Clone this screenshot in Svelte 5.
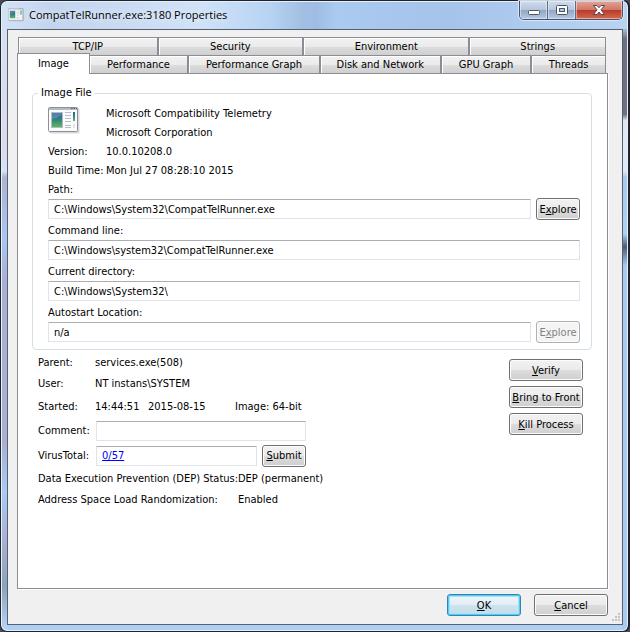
<script>
  const backTabs = [
    { name: "TCP/IP", size: 139 },
    { name: "Security", size: 145 },
    { name: "Environment", size: 166 },
    { name: "Strings", size: 136 },
  ];

  const frontTabs = [
    { name: "Image", size: 72 },
    { name: "Performance", size: 99 },
    { name: "Performance Graph", size: 132 },
    { name: "Disk and Network", size: 121 },
    { name: "GPU Graph", size: 90 },
    { name: "Threads", size: 74 },
  ];

  let active = $state("Image");
  let comment = $state("");

  let fields = $state([
    { id: "path", label: "Path:", value: "C:\\Windows\\System32\\CompatTelRunner.exe", explore: true },
    { id: "cmd", label: "Command line:", value: "C:\\Windows\\system32\\CompatTelRunner.exe" },
    { id: "cwd", label: "Current directory:", value: "C:\\Windows\\System32\\" },
    { id: "autostart", label: "Autostart Location:", value: "n/a", explore: true, disabled: true },
  ]);
</script>

{#snippet appIcon()}
  <svg class="app-icon" viewBox="0 0 32 27" aria-hidden="true">
    <rect x="1.5" y="1.5" width="30" height="25" rx="1" fill="#000" opacity=".15" />
    <rect x=".5" y=".5" width="29" height="24" rx="1" fill="#fafbfc" stroke="#8b9097" />
    <path d="M1 2h28" stroke="#b4bac2" stroke-width="2" />
    <path d="M23 1.5h1.500M25.500 1.500h1.500M28 1.500h1" stroke="#5a626b" />
    <rect x="3" y="5" width="12" height="16" fill="#b3bbc4" />
    <rect x="4" y="6" width="10" height="14" fill="url(#screen)" />
    <path d="M4 12q5-1 10-4v-2h-10z" fill="#fff" opacity=".18" />
    <path d="M17 5.500h6M17 8.500h6M17 11.500h6M17 14.500h6M17 18.500h6M17 20.500h6" stroke="#b9bcc0" />
    <rect x="25" y="5" width="2" height="9" fill="url(#screen)" />
    <rect x="25" y="17" width="2" height="4" fill="#e4e6e8" />
    <defs>
      <linearGradient id="screen" x1="0" y1="0" x2="0" y2="1">
        <stop offset="0" stop-color="#2c5f9e" />
        <stop offset=".5" stop-color="#34857f" />
        <stop offset="1" stop-color="#5cb85a" />
      </linearGradient>
    </defs>
  </svg>
{/snippet}

<div class="window">
  <header>
    <span class="small-icon">{@render appIcon()}</span>
    <h1>CompatTelRunner.exe:3180 Properties</h1>
    <div class="caption">
      <button aria-label="Minimize">
        <svg width="14" height="12" viewBox="0 0 14 12">
          <rect x="1.500" y="6.500" width="11" height="4" rx="1" fill="#fff" stroke="#4c5567" />
        </svg>
      </button>
      <button aria-label="Maximize">
        <svg width="14" height="12" viewBox="0 0 14 12">
          <rect x="1.500" y="1.500" width="11" height="9" rx="1" fill="#fff" stroke="#4c5567" />
          <rect x="4.500" y="4.500" width="5" height="3" fill="#b6c6dc" stroke="#4c5567" />
        </svg>
      </button>
      <button class="close" aria-label="Close">
        <svg width="14" height="12" viewBox="0 0 14 12">
          <path
            d="M1.500 1.500h3.500l2 2.200 2-2.200h3.500l-3.500 4.300 3.500 4.700h-3.500l-2-2.500-2 2.500h-3.500l3.500-4.700z"
            fill="#fff"
            stroke="#544650"
          />
        </svg>
      </button>
    </div>
  </header>

  <main>
    <div class="tabs" role="tablist">
      <div class="row back">
        {#each backTabs as tab}
          <button role="tab" aria-selected={active === tab.name} style="flex-grow: {tab.size}" onclick={() => (active = tab.name)}>
            {tab.name}
          </button>
        {/each}
      </div>
      <div class="row front">
        {#each frontTabs as tab}
          <button
            role="tab"
            class:active={active === tab.name}
            aria-selected={active === tab.name}
            style="flex-grow: {tab.size}"
            onclick={() => (active = tab.name)}
          >
            {tab.name}
          </button>
        {/each}
      </div>
    </div>

    <section class="panel" role="tabpanel">
      <fieldset>
        <legend>Image File</legend>
        <div class="about">
          <span class="big-icon">{@render appIcon()}</span>
          <span>Microsoft Compatibility Telemetry</span>
          <span>Microsoft Corporation</span>
          <span>Version:</span>
          <span>10.0.10208.0</span>
          <span>Build Time:</span>
          <span>Mon Jul 27 08:28:10 2015</span>
        </div>
        <div class="fields">
          {#each fields as field}
            <div class="field">
              <label for={field.id}>{field.label}</label>
              <div class="line">
                <input id={field.id} type="text" readonly value={field.value} />
                {#if field.explore}
                  <button class="btn" disabled={field.disabled}>E<u>x</u>plore</button>
                {/if}
              </div>
            </div>
          {/each}
        </div>
      </fieldset>

      <div class="details">
        <div class="info">
          <div class="item"><span>Parent:</span><span>services.exe(508)</span></div>
          <div class="item"><span>User:</span><span>NT instans\SYSTEM</span></div>
          <div class="item started">
            <span>Started:</span><span>14:44:51</span><span>2015-08-15</span><span>Image: 64-bit</span>
          </div>
          <div class="item entry">
            <label for="comment">Comment:</label>
            <input id="comment" type="text" bind:value={comment} />
          </div>
          <div class="item entry">
            <span>VirusTotal:</span>
            <div class="line">
              <div class="result"><a href="#virustotal">0/57</a></div>
              <button class="btn"><u>S</u>ubmit</button>
            </div>
          </div>
          <div class="item wide"><span>Data Execution Prevention (DEP) Status:</span><span>DEP (permanent)</span></div>
          <div class="item wide"><span>Address Space Load Randomization:</span><span>Enabled</span></div>
        </div>
        <div class="actions">
          <button class="btn"><u>V</u>erify</button>
          <button class="btn"><u>B</u>ring to Front</button>
          <button class="btn"><u>K</u>ill Process</button>
        </div>
      </div>
    </section>

    <footer>
      <button class="btn default"><u>O</u>K</button>
      <button class="btn"><u>C</u>ancel</button>
      <svg class="grip" width="9" height="9" viewBox="0 0 9 9" aria-hidden="true">
        <path d="M7 0h2v2h-2zM4 3h2v2h-2zM7 3h2v2h-2zM1 6h2v2h-2zM4 6h2v2h-2zM7 6h2v2h-2z" fill="#c4c4c4" />
      </svg>
    </footer>
  </main>
</div>

<style>
  :global(body) {
    margin: 0;
    background: #4a4a52;
  }

  .window,
  button,
  input {
    font-family: Tahoma, "DejaVu Sans Condensed", "DejaVu Sans", sans-serif;
    font-size: 11px;
    color: #000;
  }

  .window {
    box-sizing: border-box;
    display: flex;
    flex-direction: column;
    min-height: 100vh;
    padding: 0 5px 6px 6px;
    border: 1px solid #20222c;
    border-right-width: 2px;
    border-radius: 7px;
    box-shadow: inset 0 0 0 1px #e4f1fd;
    background:
      linear-gradient(90deg, #d3e3f6 0, #c3d4ee 50px, #c9dbf3 120px, #cfe2f8 200px, #b7d3f2 270px, #a3bfe2 300px, #9fbde3 315px, #abcaf0 335px, #a6c3ea 450px, #b9d4f2 100%) top / 100% 28px no-repeat,
      linear-gradient(180deg, #d4e2f5 0, #dcd9ea 24%, #d2e3f8 27%, #aeb2d4 28%, #a9c6f0 38%, #a9aed2 45%, #a9aed2 70%, #a9cbf4 78%, #a9aed2 86%, #8ba3bf 93%, #b8d6f5 100%) left / 7px 100% no-repeat,
      linear-gradient(180deg, #b9d4f2 0, #b9d4f2 4%, #6f7180 6%, #6f7180 18%, #e0e8f2 19%, #dfe9f6 27%, #a9cbed 28%, #aed0f2 37%, #4c5a72 39%, #a9cbed 42%, #a9cbed 100%) right / 6px 100% no-repeat,
      #aed0f3;
  }

  header {
    display: flex;
    align-items: flex-start;
    height: 28px;
  }

  .app-icon {
    display: block;
    width: 100%;
  }

  .small-icon {
    width: 16px;
    margin: 7px 5px 0 1px;
  }

  h1 {
    flex: 1;
    margin: 6px 0 0;
    font: 11px/16px "Open Sans", "Noto Sans", sans-serif;
    text-shadow: 0 0 6px #fff;
  }

  .caption {
    display: flex;
    overflow: hidden;
    border: 1px solid #47536a;
    border-top: 0;
    border-radius: 0 0 5px 5px;
    box-shadow: 0 0 1px 1px #d9e8f8;
  }

  .caption button {
    display: flex;
    align-items: center;
    justify-content: center;
    width: 28px;
    height: 18px;
    padding: 0;
    border: 0;
    border-right: 1px solid #5c6a84;
    background: linear-gradient(#cfdcec 0, #b6c6dc 48%, #91a5c2 50%, #b4c9e4 100%);
    box-shadow: inset 0 0 0 1px rgba(255, 255, 255, 0.45);
  }

  .caption .close {
    width: 46px;
    border-right: 0;
    background: linear-gradient(#e2a598 0, #d27766 48%, #b8382a 50%, #d6694f 100%);
  }

  main {
    flex: 1;
    display: flex;
    flex-direction: column;
    padding: 7px 14px 8px 9px;
    border: 1px solid #56606e;
    background: #f0f0f0;
  }

  .row {
    display: flex;
  }

  .back {
    padding: 0 2px 0 1px;
  }

  .front {
    padding-right: 2px;
  }

  .tabs button {
    flex: 1 1 0;
    box-sizing: border-box;
    min-width: 0;
    height: 18px;
    padding: 0;
    border: 1px solid #8b8c95;
    border-right-width: 2px;
    border-bottom: 0;
    border-left-width: 0;
    box-shadow: inset 1px 1px #fff;
    background: linear-gradient(#f2f2f2 0, #ebebeb 50%, #dddddd 52%, #cfcfcf 100%);
    white-space: nowrap;
  }

  .tabs button:last-child {
    border-right-width: 1px;
  }

  .back button:first-child,
  .tabs .active {
    border-left-width: 1px;
  }

  .tabs .active {
    position: relative;
    height: 21px;
    margin: -2px 0 -1px;
    padding-bottom: 2px;
    border-right-width: 1px;
    background: #fff;
  }

  .panel {
    flex: 1;
    padding: 11px 15px 0 14px;
    border: 1px solid #8b8c95;
    box-shadow: 1px 1px #fff;
    background: #fff;
  }

  fieldset {
    min-width: 0;
    margin: 0;
    padding: 3px 11px 7px 15px;
    border: 1px solid #d5dfe5;
    border-radius: 4px;
  }

  legend {
    margin-left: -10px;
    padding: 0 3px;
    line-height: 16px;
  }

  .about {
    display: grid;
    grid-template-columns: 58px 1fr;
    grid-auto-rows: 19px;
    line-height: 19px;
  }

  .big-icon {
    grid-row: span 2;
    width: 32px;
    padding-top: 3px;
  }

  .fields {
    display: grid;
    gap: 2px;
  }

  .field label {
    display: block;
    line-height: 19px;
  }

  .line {
    display: flex;
    align-items: center;
    gap: 5px;
    height: 20px;
  }

  input,
  .result {
    box-sizing: border-box;
    flex: 1;
    min-width: 0;
    height: 20px;
    padding: 0 5px;
    border: 1px solid #e2e3ea;
    border-top-color: #abadb3;
    border-radius: 1px;
    outline: 0;
    background: #fff;
    line-height: 18px;
  }

  a {
    color: #00f;
  }

  .btn {
    box-sizing: border-box;
    height: 22px;
    padding: 0 2px;
    border: 1px solid #707070;
    border-radius: 3px;
    box-shadow: inset 0 0 0 1px #fcfcfc;
    background: linear-gradient(#f2f2f2 0, #ebebeb 49%, #dddddd 50%, #cfcfcf 100%);
    white-space: nowrap;
  }

  .line .btn {
    min-width: 44px;
  }

  .btn:disabled {
    border-color: #adb2b5;
    background: #f4f4f4;
    color: #838383;
  }

  .btn.default {
    border-color: #3c7fb1;
    box-shadow: inset 0 0 0 1px #48d1f5, inset 0 0 0 2px #a5e4f8;
    background: linear-gradient(#eef5f9 0, #e2eef5 49%, #d0e3ee 50%, #c2dbe9 100%);
  }

  .details {
    display: flex;
    justify-content: space-between;
    padding: 2px 9px 0 6px;
  }

  .item {
    display: grid;
    grid-template-columns: 57px 1fr;
    align-items: center;
    height: 21px;
    white-space: nowrap;
  }

  .started {
    grid-template-columns: 57px 53px 87px 1fr;
    height: 24px;
  }

  .entry {
    grid-template-columns: 58px 210px;
    height: 25px;
  }

  .wide {
    grid-template-columns: 200px 1fr;
  }

  .actions {
    display: flex;
    flex-direction: column;
    gap: 5px;
    padding-top: 7px;
  }

  .actions .btn,
  footer .btn {
    width: 74px;
  }

  footer {
    position: relative;
    display: flex;
    justify-content: flex-end;
    gap: 13px;
    padding-top: 5px;
  }

  .grip {
    position: absolute;
    right: -12px;
    bottom: -6px;
  }
</style>
